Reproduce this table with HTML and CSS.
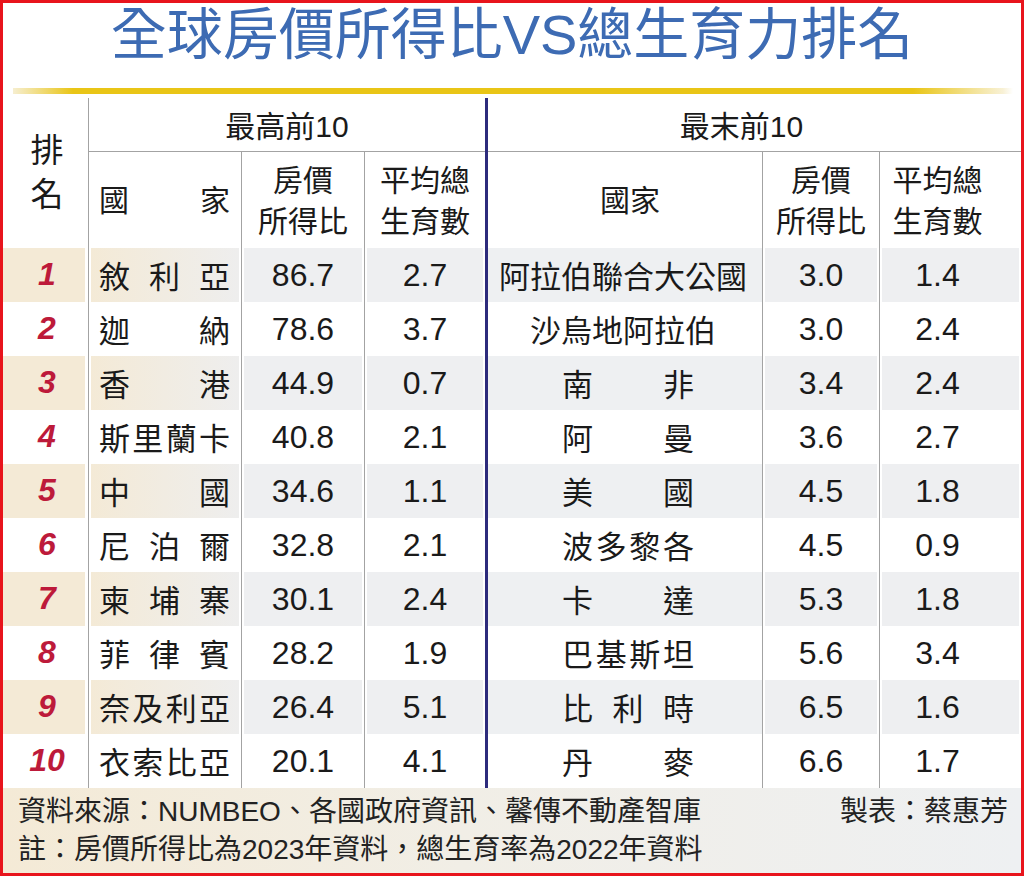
FILE: index.html
```html
<!DOCTYPE html>
<html lang="zh-Hant">
<head>
<meta charset="utf-8">
<title>全球房價所得比VS總生育力排名</title>
<link rel="stylesheet" href="styles.css">
</head>
<body>
<div class="frame">
  <h1 class="title">全球房價所得比VS總生育力排名</h1>
  <div class="goldline"></div>
  <div class="table">
    <div class="divider"></div>
    <div class="h-rank"><span>排</span><span>名</span></div>
    <div class="h-group h-left">最高前10</div>
    <div class="h-group h-right">最末前10</div>
    <div class="h2 h2-name"><span>國</span><span>家</span></div>
    <div class="h2 bl h2-c3">房價<br>所得比</div>
    <div class="h2 bl h2-c4">平均總<br>生育數</div>
    <div class="h2 h2-rname">國家</div>
    <div class="h2 bl h2-c7">房價<br>所得比</div>
    <div class="h2 bl h2-c8 padr">平均總<br>生育數</div>

    <div class="c rank s">1</div><div class="c name bl s"><span>敘</span><span>利</span><span>亞</span></div><div class="c num bl s">86.7</div><div class="c num bl s">2.7</div><div class="c rname s">阿拉伯聯合大公國</div><div class="c num bl s">3.0</div><div class="c num bl s padr">1.4</div>

    <div class="c rank">2</div><div class="c name bl"><span>迦</span><span>納</span></div><div class="c num bl">78.6</div><div class="c num bl">3.7</div><div class="c rname">沙烏地阿拉伯</div><div class="c num bl">3.0</div><div class="c num bl padr">2.4</div>

    <div class="c rank s">3</div><div class="c name bl s"><span>香</span><span>港</span></div><div class="c num bl s">44.9</div><div class="c num bl s">0.7</div><div class="c rname s"><div class="spread"><span>南</span><span>非</span></div></div><div class="c num bl s">3.4</div><div class="c num bl s padr">2.4</div>

    <div class="c rank">4</div><div class="c name bl"><span>斯</span><span>里</span><span>蘭</span><span>卡</span></div><div class="c num bl">40.8</div><div class="c num bl">2.1</div><div class="c rname"><div class="spread"><span>阿</span><span>曼</span></div></div><div class="c num bl">3.6</div><div class="c num bl padr">2.7</div>

    <div class="c rank s">5</div><div class="c name bl s"><span>中</span><span>國</span></div><div class="c num bl s">34.6</div><div class="c num bl s">1.1</div><div class="c rname s"><div class="spread"><span>美</span><span>國</span></div></div><div class="c num bl s">4.5</div><div class="c num bl s padr">1.8</div>

    <div class="c rank">6</div><div class="c name bl"><span>尼</span><span>泊</span><span>爾</span></div><div class="c num bl">32.8</div><div class="c num bl">2.1</div><div class="c rname"><div class="spread"><span>波</span><span>多</span><span>黎</span><span>各</span></div></div><div class="c num bl">4.5</div><div class="c num bl padr">0.9</div>

    <div class="c rank s">7</div><div class="c name bl s"><span>柬</span><span>埔</span><span>寨</span></div><div class="c num bl s">30.1</div><div class="c num bl s">2.4</div><div class="c rname s"><div class="spread"><span>卡</span><span>達</span></div></div><div class="c num bl s">5.3</div><div class="c num bl s padr">1.8</div>

    <div class="c rank">8</div><div class="c name bl"><span>菲</span><span>律</span><span>賓</span></div><div class="c num bl">28.2</div><div class="c num bl">1.9</div><div class="c rname"><div class="spread"><span>巴</span><span>基</span><span>斯</span><span>坦</span></div></div><div class="c num bl">5.6</div><div class="c num bl padr">3.4</div>

    <div class="c rank s">9</div><div class="c name bl s"><span>奈</span><span>及</span><span>利</span><span>亞</span></div><div class="c num bl s">26.4</div><div class="c num bl s">5.1</div><div class="c rname s"><div class="spread"><span>比</span><span>利</span><span>時</span></div></div><div class="c num bl s">6.5</div><div class="c num bl s padr">1.6</div>

    <div class="c rank">10</div><div class="c name bl"><span>衣</span><span>索</span><span>比</span><span>亞</span></div><div class="c num bl">20.1</div><div class="c num bl">4.1</div><div class="c rname"><div class="spread"><span>丹</span><span>麥</span></div></div><div class="c num bl">6.6</div><div class="c num bl padr">1.7</div>
  </div>
  <div class="footer">
    <div class="fline">
      <span>資料來源：NUMBEO、各國政府資訊、馨傳不動產智庫</span>
      <span>製表：蔡惠芳</span>
    </div>
    <div class="fline">
      <span>註：房價所得比為2023年資料，總生育率為2022年資料</span>
    </div>
  </div>
</div>
</body>
</html>
```

FILE: styles.css
```css
* { box-sizing: border-box; }
html, body { margin: 0; padding: 0; background: #fff; }
body {
  font-family: "Liberation Sans", "Noto Sans CJK TC", sans-serif;
  color: #1a1a1a;
}
.frame {
  width: 1024px;
  height: 876px;
  border: 3px solid #e8141c;
  background: #fff;
  display: flex;
  flex-direction: column;
  overflow: hidden;
}
.title {
  margin: 0;
  height: 85px;
  line-height: 64px;
  font-size: 56px;
  font-weight: 400;
  color: #3d6bb3;
  text-align: center;
  letter-spacing: 0;
}
.goldline {
  height: 6px;
  margin: 0 8px 4px 10px;
  background: linear-gradient(90deg, #f6eed0 0%, #e9c516 6%, #e9c516 90%, #f8f1d6 99%, #ffffff 100%);
}
.table {
  display: grid;
  grid-template-columns: 85px 153px 123px 121px 3px 274px 117px 142px;
  grid-template-rows: 54px 96px repeat(10, 54px);
}
.divider {
  grid-column: 5;
  grid-row: 1 / -1;
  background: #2d2b7c;
}
.bl { border-left: 1px solid #a3a3a3; }
.h-rank {
  grid-column: 1;
  grid-row: 1 / 3;
  display: flex;
  flex-direction: column;
  align-items: center;
  justify-content: center;
  font-size: 33px;
  line-height: 44px;
  padding-left: 3px;
}
.h-group {
  grid-row: 1;
  display: flex;
  align-items: center;
  justify-content: center;
  font-size: 30px;
  border-bottom: 1px solid #a3a3a3;
  padding-bottom: 2px;
}
.h-left { grid-column: 2 / 5; border-left: 1px solid #a3a3a3; }
.h-right { grid-column: 6 / 9; padding-right: 26px; }
.h2 {
  grid-row: 2;
  display: flex;
  align-items: center;
  justify-content: center;
  text-align: center;
  font-size: 30px;
  line-height: 41px;
  padding-top: 1px;
}
.h2-name {
  grid-column: 2;
  border-left: 1px solid #a3a3a3;
  justify-content: space-between;
  padding: 1px 11px 0 10px;
}
.h2-c3 { grid-column: 3; }
.h2-c4 { grid-column: 4; }
.h2-rname { grid-column: 6; padding-left: 10px; }
.h2-c7 { grid-column: 7; }
.h2-c8 { grid-column: 8; }
.padr { padding-right: 26px; }

.c {
  display: flex;
  align-items: center;
  justify-content: center;
  font-size: 31px;
  white-space: nowrap;
  padding-bottom: 2px;
}
.rank {
  font-weight: bold;
  font-style: italic;
  font-size: 32px;
  color: #bd1a3a;
  padding-left: 3px;
}
.name {
  justify-content: space-between;
  padding: 0 11px 2px 10px;
}
.num { font-size: 32px; padding-bottom: 0; }
.rname:not(:has(.spread)) { padding-right: 4px; }
.spread {
  width: 132px;
  margin-left: 6px;
  display: flex;
  justify-content: space-between;
}
.s { background: #eeeff1; box-shadow: inset 2px 0 0 #fff, inset -2px 0 0 #fff; }
.rank.s { background: #f4ead6; box-shadow: inset -3px 0 0 #fff; }
.name.s { background: linear-gradient(90deg, #f4ead6 0%, #f1ece2 50%, #eeeeee 100%); }
.rname.s { box-shadow: none; background: #eef0f2; }

.footer {
  flex: 1;
  background: linear-gradient(90deg, #f4ead6 0%, #f1eee6 45%, #eef0f2 100%);
  padding: 5px 13px 0 15px;
  font-size: 28px;
  color: #222;
}
.fline {
  display: flex;
  justify-content: space-between;
  line-height: 38px;
  white-space: nowrap;
}
```
